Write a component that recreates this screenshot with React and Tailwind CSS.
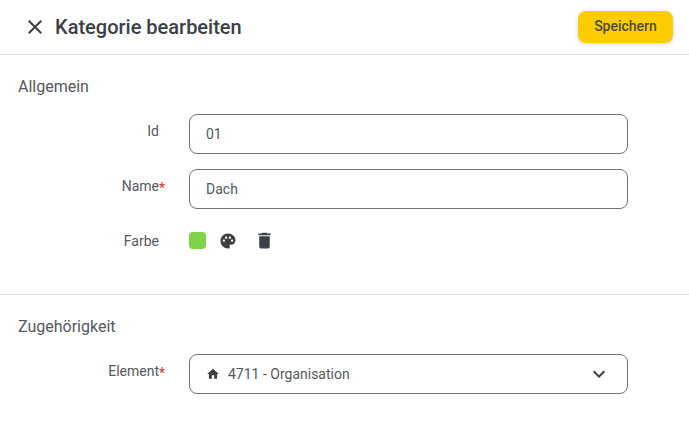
import React from 'react';
import { MdClose, MdDelete, MdHome, MdKeyboardArrowDown, MdPalette } from 'react-icons/md';

const FormRow = ({ label, required, labelClass = '', children, className = '' }) => (
  <div className={`flex ${className}`}>
    <div className={`w-[159px] text-right text-[14px] leading-[20px] text-[#55585e] ${labelClass}`}>
      <span className="relative">
        {label}
        {required && <span className="absolute left-full top-0 text-[#d8372f]">*</span>}
      </span>
    </div>
    <div className="ml-[30px] w-[439px]">{children}</div>
  </div>
);

const TextField = ({ value }) => (
  <div className="flex h-[40px] items-center rounded-[8px] border border-[#6f7174] px-[16px] text-[14px] text-[#55585e]">
    {value}
  </div>
);

const App = () => {
  return (
    <div className="h-[434px] w-[689px] overflow-hidden bg-white font-['Roboto',sans-serif]">
      {/* Header */}
      <div className="flex h-[55px] items-center border-b border-[#dfdfe3] pl-[23px] pr-[16px]">
        <MdClose className="text-[24px] text-[#3b4046]" />
        <h1 className="ml-[8px] text-[20px] font-medium leading-[24px] text-[#3b4046]">Kategorie bearbeiten</h1>
        <button className="ml-auto h-[32px] w-[95px] rounded-[8px] bg-[#ffcc00] pb-[1px] text-[14px] font-medium text-[#4a4b45] shadow-[0_1px_4px_rgba(0,0,0,0.18)]">
          Speichern
        </button>
      </div>

      {/* Allgemein */}
      <div className="h-[240px] border-b border-[#dfdfe3] pt-[22px]">
        <h2 className="pl-[18px] text-[16px] leading-[20px] text-[#55585e]">Allgemein</h2>
        <FormRow label="Id" className="mt-[17px]" labelClass="pt-[7px]">
          <TextField value="01" />
        </FormRow>
        <FormRow label="Name" required className="mt-[15px]" labelClass="pt-[7px]">
          <TextField value="Dach" />
        </FormRow>
        <FormRow label="Farbe" className="mt-[22px]">
          <div className="flex h-[19px] items-center">
            <div className="h-[17px] w-[17px] rounded-[4px] bg-[#7ed348]" />
            <MdPalette className="ml-[13px] shrink-0 text-[18px] text-[#3b4046]" />
            <MdDelete className="ml-[17px] shrink-0 text-[21px] text-[#3b4046]" />
          </div>
        </FormRow>
      </div>

      {/* Zugehoerigkeit */}
      <div className="pt-[22px]">
        <h2 className="pl-[18px] text-[16px] leading-[20px] text-[#55585e]">Zugehörigkeit</h2>
        <FormRow label="Element" required className="mt-[17px]" labelClass="pt-[7px]">
          <div className="flex h-[40px] items-center rounded-[8px] border border-[#6f7174] pl-[16px] pr-[16px] text-[14px] text-[#55585e]">
            <MdHome className="text-[14px] text-[#3b4046]" />
            <span className="ml-[8px]">4711 - Organisation</span>
            <MdKeyboardArrowDown className="ml-auto text-[24px] text-[#3b4046]" />
          </div>
        </FormRow>
      </div>
    </div>
  );
};

export default App;
